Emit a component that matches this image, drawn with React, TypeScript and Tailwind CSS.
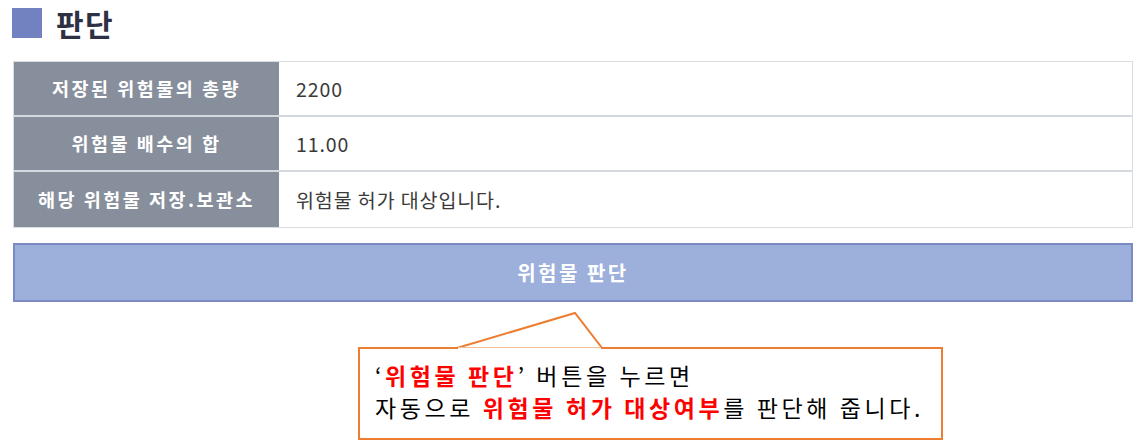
import React from 'react';

const rows = [
  { label: '저장된 위험물의 총량', value: '2200' },
  { label: '위험물 배수의 합', value: '11.00' },
  { label: '해당 위험물 저장.보관소', value: '위험물 허가 대상입니다.' },
];

export default function App() {
  return (
    <div
      className="w-[1142px] h-[441px] bg-white overflow-hidden pl-[13px] pr-[9px] pt-[8px]"
      style={{ fontFamily: '"Noto Sans CJK KR", "Noto Sans", sans-serif' }}
    >
      {/* title */}
      <div className="flex items-center h-[30px]">
        <div className="w-[30px] h-[30px] -ml-[1px] bg-[#7282c0]" />
        <h2 className="ml-[14px] text-[30px] font-bold text-[#2e3144] leading-none tracking-[1.5px]">판단</h2>
      </div>

      {/* result table */}
      <div className="mt-[23px] border border-[#d8dde3]">
        {rows.map((r, i) => (
          <div
            key={r.label}
            className={`grid grid-cols-[265px_1fr] h-[55px] ${i < rows.length - 1 ? 'border-b-2 border-[#d3d9df]' : ''}`}
          >
            <div className="bg-[#878f9c] flex items-center justify-center text-white font-bold text-[18.5px] tracking-[2.5px]">
              {r.label}
            </div>
            <div className="flex items-center pl-[17px] text-[19.5px] text-[#3a3a3a] tracking-[0.9px]">
              {r.value}
            </div>
          </div>
        ))}
      </div>

      {/* button */}
      <button className="mt-[15px] w-full h-[59px] bg-[#9dafdb] border-2 border-[#7b8ac2] flex items-center justify-center text-white font-bold text-[20px] tracking-[2.5px]">
        위험물 판단
      </button>

      {/* callout */}
      <div className="relative mt-[45px] ml-[345px] w-[585px] h-[93px] border-2 border-[#ed7d31] bg-white pl-[15px] pt-[10px] text-[23px] leading-[32px] text-black tracking-[3.6px]">
        <svg
          className="absolute left-[-2px] top-[-37px] overflow-visible"
          width="260"
          height="38"
          viewBox="0 0 260 38"
        >
          <polygon points="99,36 217,1 244,36" fill="white" stroke="#ed7d31" strokeWidth="2" />
          <line x1="100" y1="37" x2="243" y2="37" stroke="white" strokeWidth="3" />
        </svg>
        <p className="relative">
          ‘<span className="text-[#ff0000] font-bold">위험물 판단</span>’ 버튼을 누르면
        </p>
        <p className="relative">
          자동으로 <span className="text-[#ff0000] font-bold">위험물 허가 대상여부</span>를 판단해 줍니다.
        </p>
      </div>
    </div>
  );
}
